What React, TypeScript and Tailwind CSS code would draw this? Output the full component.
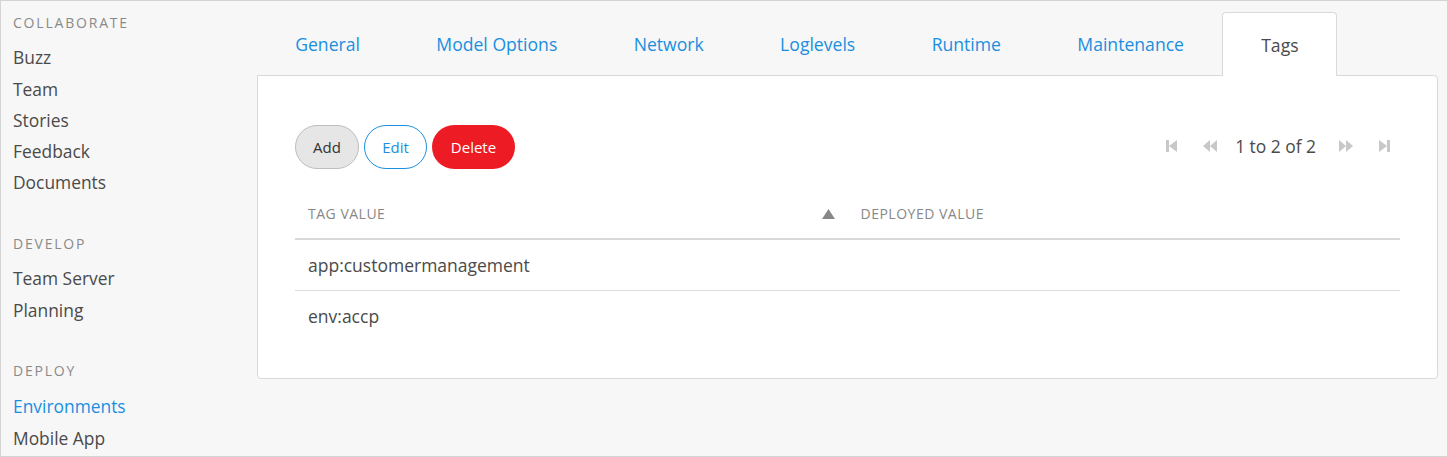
import React from "react";

const font = { fontFamily: '"Open Sans", "Noto Sans", sans-serif' };

function FirstIcon() {
  return (
    <svg width="11" height="12" viewBox="0 0 11 12" fill="#c8c8c8">
      <rect x="0" y="0" width="3" height="12" />
      <polygon points="11,0 11,12 3,6" />
    </svg>
  );
}
function PrevIcon() {
  return (
    <svg width="14" height="12" viewBox="0 0 14 12" fill="#c8c8c8">
      <polygon points="7,0 7,12 0,6" />
      <polygon points="14,0 14,12 7,6" />
    </svg>
  );
}
function NextIcon() {
  return (
    <svg width="14" height="12" viewBox="0 0 14 12" fill="#c8c8c8">
      <polygon points="0,0 0,12 7,6" />
      <polygon points="7,0 7,12 14,6" />
    </svg>
  );
}
function LastIcon() {
  return (
    <svg width="11" height="12" viewBox="0 0 11 12" fill="#c8c8c8">
      <polygon points="0,0 0,12 8,6" />
      <rect x="8" y="0" width="3" height="12" />
    </svg>
  );
}

export default function App() {
  const tabs = ["General", "Model Options", "Network", "Loglevels", "Runtime", "Maintenance"];
  const head = "text-[14px] tracking-[1.8px] text-[#8a8a8a] leading-[20px]";
  return (
    <div
      style={font}
      className="w-[1448px] h-[457px] bg-[#f7f7f7] border border-[#d4d4d4] flex text-[#4a4a4a] overflow-hidden"
    >
      <aside className="w-[256px] shrink-0 pl-[12px] pt-[12px]">
        <div className={head}>COLLABORATE</div>
        <ul className="mt-[9.4px] text-[17.4px] leading-[31.25px]">
          <li>Buzz</li>
          <li>Team</li>
          <li>Stories</li>
          <li>Feedback</li>
          <li>Documents</li>
        </ul>
        <div className={"mt-[35.4px] " + head}>DEVELOP</div>
        <ul className="mt-[9.4px] text-[17.4px] leading-[31.25px]">
          <li>Team Server</li>
          <li>Planning</li>
        </ul>
        <div className={"mt-[35px] " + head}>DEPLOY</div>
        <ul className="mt-[10.4px] text-[17.4px] leading-[31.25px]">
          <li className="text-[#1a8fe0]">Environments</li>
          <li>Mobile App</li>
        </ul>
      </aside>
      <main className="flex-1 pr-[9px] pt-[11px]">
        <div className="flex h-[63px] relative z-10">
          {tabs.map((t) => (
            <div key={t} className="px-[38.2px] pt-[1px] flex items-center text-[17.6px] text-[#1a8fe0]">
              {t}
            </div>
          ))}
          <div className="pl-[38px] pr-[37px] pt-[1px] flex items-center text-[17.6px] text-[#4a4a4a] bg-white border border-b-0 border-[#d9d9d9] rounded-t-[4px] h-[64px]">
            Tags
          </div>
        </div>
        <div className="bg-white border border-[#d9d9d9] rounded-b-[4px] rounded-tr-[4px] h-[304px] px-[37px] pt-[49px]">
          <div className="flex items-center justify-between">
            <div className="flex gap-[5px] text-[15px]">
              <button className="h-[44px] w-[64px] rounded-full bg-[#e6e6e6] border border-[#bdbdbd] text-[#333]">Add</button>
              <button className="h-[44px] w-[63px] rounded-full bg-white border border-[#1a8fe0] text-[#1a8fe0]">Edit</button>
              <button className="h-[44px] w-[83px] rounded-full bg-[#ed1c24] text-white">Delete</button>
            </div>
            <div className="flex items-center mr-[10px] text-[17.4px] text-[#4a4a4a] -mt-[2px]">
              <FirstIcon />
              <span className="ml-[26px] flex"><PrevIcon /></span>
              <span className="ml-[18px]">1 to 2 of 2</span>
              <span className="ml-[23px] flex"><NextIcon /></span>
              <span className="ml-[26px] flex"><LastIcon /></span>
            </div>
          </div>
          <table className="w-full mt-[19px] border-collapse">
            <thead>
              <tr className="border-b-2 border-[#d9d9d9] h-[51px]">
                <th className="w-1/2 text-left font-normal text-[14px] tracking-[0.5px] text-[#888] px-[13px] pt-[1px]">
                  <div className="flex justify-between items-center">
                    <span>TAG VALUE</span>
                    <svg width="13" height="10" viewBox="0 0 13 10" fill="#888">
                      <polygon points="6.5,0 13,10 0,10" />
                    </svg>
                  </div>
                </th>
                <th className="text-left font-normal text-[14px] tracking-[0.5px] text-[#888] px-[13px] pt-[1px]">DEPLOYED VALUE</th>
              </tr>
            </thead>
            <tbody className="text-[17.5px] text-[#4a4a4a]">
              <tr className="border-b border-[#dcdcdc] h-[51px]">
                <td className="px-[13px]">app:customermanagement</td>
                <td></td>
              </tr>
              <tr className="h-[52px]">
                <td className="px-[13px]">env:accp</td>
                <td></td>
              </tr>
            </tbody>
          </table>
        </div>
      </main>
    </div>
  );
}
